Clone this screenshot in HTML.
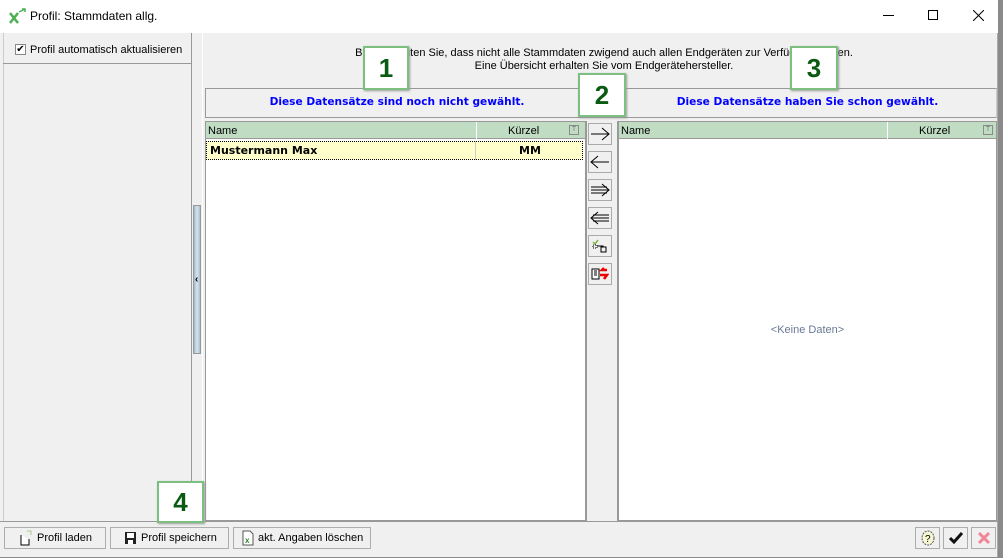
<!DOCTYPE html>
<html><head><meta charset="utf-8"><style>
*{box-sizing:border-box;margin:0;padding:0}
body{width:1003px;height:558px;overflow:hidden;background:#8a8a8a;font-family:"Liberation Sans",sans-serif;font-size:11px;color:#000;position:relative}
.a{position:absolute}
.win{left:0;top:0;width:998px;height:557px;background:#f0f0f0;border-right:1px solid #aaa}
.title{left:0;top:0;width:998px;height:33px;background:#fff}
.hdr{background:#c0dcc3;border-bottom:1px solid #999;height:17px}
.btn{background:#f0f0f0;border:1px solid #adadad;height:22px;display:flex;align-items:center;font-size:11px}
.num{background:#fff;border:2px solid #7cc07f;box-shadow:1px 1px 2px #999;color:#0a5a12;font-weight:bold;font-size:26px;display:flex;align-items:center;justify-content:center}
.mb{left:588px;width:24px;height:22px;background:#f0f0f0;border:1px solid #aaa;display:flex;align-items:center;justify-content:center}
.flt{width:10px;height:10px;border:1px solid #8a8a8a;font-size:7px;line-height:8px;text-align:center;color:#777}
.bl{color:#0000ff;font-weight:bold;font-family:'DejaVu Sans',sans-serif;font-size:10.6px;text-align:center}
</style></head><body>
<div class="a win"></div>
<div class="a title"></div>
<svg class="a" style="left:9px;top:8px" width="18" height="16"><path d="M1 15 L9 5 M1 5 L9 15" stroke="#4caf50" stroke-width="2.5"/><path d="M10 4 L16 1 M13 1 L16 1 L16 4" stroke="#4caf50" stroke-width="1.5" fill="none"/></svg>
<div class="a" style="left:30px;top:9px;font-size:12px">Profil: Stammdaten allg.</div>
<div class="a" style="left:883px;top:15px;width:11px;height:1px;background:#000"></div>
<div class="a" style="left:928px;top:10px;width:10px;height:10px;border:1px solid #000"></div>
<svg class="a" style="left:973px;top:10px" width="11" height="11"><path d="M0 0L11 11M11 0L0 11" stroke="#000"/></svg>

<div class="a" style="left:3px;top:33px;width:189px;height:488px;border-right:1px solid #999;border-left:1px solid #ccc"></div>
<div class="a" style="left:3px;top:63px;width:189px;height:1px;background:#999"></div>
<div class="a" style="left:15px;top:44px;width:11px;height:11px;background:#fff;border:1px solid #888;font-size:10px;line-height:9px;text-align:center">✔</div>
<div class="a" style="left:30px;top:44px">Profil automatisch aktualisieren</div>
<div class="a" style="left:193px;top:205px;width:8px;height:149px;background:linear-gradient(90deg,#9fb8c8,#d8e6ef,#a8c0cf);border:1px solid #999"></div>
<div class="a" style="left:195px;top:274px;font-size:10px;font-weight:bold">‹</div>
<div class="a" style="left:202px;top:33px;width:1px;height:488px;background:#fff"></div>

<div class="a" style="left:207px;top:47px;width:794px;text-align:center;line-height:13px">Bitte beachten Sie, dass nicht alle Stammdaten zwigend auch allen Endgeräten zur Verfügung stehen.<br>Eine Übersicht erhalten Sie vom Endgerätehersteller.</div>
<div class="a" style="left:205px;top:88px;width:792px;height:30px;border:1px solid #999;border-right-color:#ccc"></div>
<div class="a bl" style="left:207px;top:96px;width:380px">Diese Datensätze sind noch nicht gewählt.</div>
<div class="a bl" style="left:618px;top:96px;width:379px">Diese Datensätze haben Sie schon gewählt.</div>

<div class="a" style="left:205px;top:121px;width:381px;height:400px;background:#fff;border:1px solid #999"></div>
<div class="a hdr" style="left:206px;top:122px;width:379px"></div>
<div class="a" style="left:208px;top:125px">Name</div>
<div class="a" style="left:476px;top:122px;width:1px;height:17px;background:#fff"></div>
<div class="a" style="left:508px;top:125px">Kürzel</div>
<div class="a flt" style="left:569px;top:125px">T</div>
<div class="a" style="left:206px;top:141px;width:377px;height:19px;background:#ffffcc;border:1px dotted #000"></div>
<div class="a" style="left:475px;top:141px;width:1px;height:19px;background:#ccc"></div>
<div class="a" style="left:210px;top:144px;font-weight:bold;font-family:'DejaVu Sans',sans-serif;font-size:11px">Mustermann Max</div>
<div class="a" style="left:519px;top:144px;font-weight:bold;font-family:'DejaVu Sans',sans-serif;font-size:11px">MM</div>

<div class="a" style="left:586px;top:121px;width:32px;height:400px;border-left:1px solid #999;border-right:1px solid #999"></div>
<div class="a mb" style="top:123px"><svg width="20" height="14"><path d="M1 7H19M12 1L19 7L12 13" stroke="#000" fill="none"/></svg></div>
<div class="a mb" style="top:151px"><svg width="20" height="14"><path d="M1 7H19M8 1L1 7L8 13" stroke="#000" fill="none"/></svg></div>
<div class="a mb" style="top:179px"><svg width="20" height="14"><path d="M1 4H17M1 7H19M1 10H17M12 1L19 7L12 13" stroke="#000" fill="none"/></svg></div>
<div class="a mb" style="top:207px"><svg width="20" height="14"><path d="M3 4H19M1 7H19M3 10H19M8 1L1 7L8 13" stroke="#000" fill="none"/></svg></div>
<div class="a mb" style="top:235px"><svg width="16" height="14"><path d="M1 3L3 5L6 1" stroke="#7ab648" fill="none" stroke-width="1.5"/><rect x="1" y="6" width="4" height="3" fill="none" stroke="#000" stroke-dasharray="1"/><rect x="9" y="8" width="5" height="5" fill="none" stroke="#000"/><path d="M5 7H11V8" stroke="#000" fill="none"/></svg></div>
<div class="a mb" style="top:263px"><svg width="18" height="14"><rect x="1" y="2" width="7" height="10" fill="#fff" stroke="#000"/><path d="M3 4H6M3 6H6M3 8H6" stroke="#000"/><path d="M16 3L11 3L13 1M9 8L16 8L13 12" stroke="#e00" stroke-width="2.5" fill="none"/></svg></div>

<div class="a" style="left:618px;top:121px;width:379px;height:400px;background:#fff;border:1px solid #999"></div>
<div class="a hdr" style="left:619px;top:122px;width:377px"></div>
<div class="a" style="left:621px;top:125px">Name</div>
<div class="a" style="left:887px;top:122px;width:1px;height:17px;background:#fff"></div>
<div class="a" style="left:919px;top:125px">Kürzel</div>
<div class="a flt" style="left:983px;top:125px">T</div>
<div class="a" style="left:618px;top:324px;width:379px;text-align:center;color:#6a7a95">&lt;Keine Daten&gt;</div>

<div class="a" style="left:0;top:521px;width:998px;height:1px;background:#999"></div>
<div class="a btn" style="left:4px;top:527px;width:102px"><svg style="margin:0 4px 0 14px" width="14" height="16"><path d="M2 5V15H10V9" stroke="#000" fill="#fff"/><path d="M8 1L12 1L12 5" stroke="#aac88a" fill="none"/></svg>Profil laden</div>
<div class="a btn" style="left:110px;top:527px;width:119px"><svg style="margin:0 4px 0 13px" width="13" height="14"><rect x="1" y="1" width="11" height="12" fill="#222"/><rect x="3" y="2" width="7" height="5" fill="#fff"/><rect x="4" y="9" width="5" height="4" fill="#fff"/></svg>Profil speichern</div>
<div class="a btn" style="left:233px;top:527px;width:138px"><svg style="margin:0 4px 0 8px" width="12" height="16"><path d="M1 1H8L11 4V15H1Z" fill="#fff" stroke="#555"/><text x="3" y="13" font-size="8" fill="#2a8a2a" font-family="Liberation Sans" font-weight="bold">x</text></svg>akt. Angaben löschen</div>
<div class="a btn" style="left:915px;top:527px;width:25px;justify-content:center"><svg width="14" height="16"><ellipse cx="7" cy="8" rx="6" ry="7" fill="#f6f6d0" stroke="#555" stroke-dasharray="2 1"/><text x="4" y="12" font-size="10" font-family="Liberation Sans">?</text></svg></div>
<div class="a btn" style="left:943px;top:527px;width:25px;justify-content:center"><svg width="14" height="12"><path d="M1 6L5 10L13 1" stroke="#111" stroke-width="3" fill="none"/></svg></div>
<div class="a btn" style="left:971px;top:527px;width:25px;justify-content:center"><svg width="12" height="12"><path d="M1 1L11 11M11 1L1 11" stroke="#f08898" stroke-width="3"/></svg></div>

<div class="a num" style="left:363px;top:46px;width:46px;height:44px">1</div>
<div class="a num" style="left:578px;top:73px;width:48px;height:44px">2</div>
<div class="a num" style="left:790px;top:46px;width:48px;height:44px">3</div>
<div class="a num" style="left:157px;top:481px;width:47px;height:42px">4</div>
</body></html>
